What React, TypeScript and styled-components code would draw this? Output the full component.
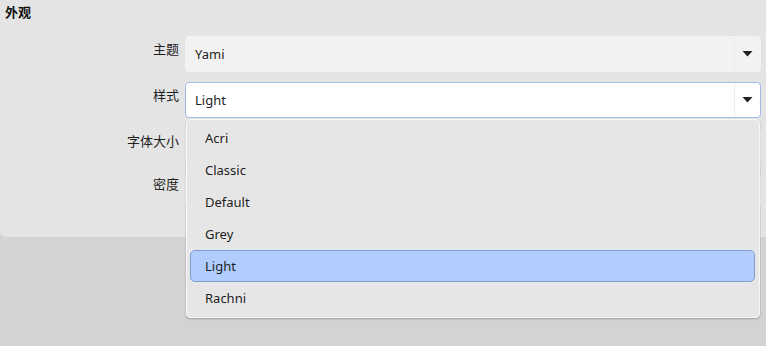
import styled, { createGlobalStyle } from 'styled-components';

const GlobalStyle = createGlobalStyle`
    html, body {
        margin: 0;
        padding: 0;
        background: #d3d3d3;
        font-family: 'Noto Sans', 'Noto Sans CJK SC', sans-serif;
        font-size: 13px;
        color: #1e1e1e;
    }
    body, #root {
        min-height: 100vh;
    }
`;

const styles = ['Acri', 'Classic', 'Default', 'Grey', 'Light', 'Rachni'];

const Caret = () => (
    <svg width="11" height="6" viewBox="0 0 11 6">
        <path d="M0.5 0 H10.5 L5.5 5.5 Z" fill="#222" />
    </svg>
);

const App: React.FC = () => {
    return (
        <StyledPage>
            <GlobalStyle />
            <StyledPanel>
                <StyledTitle>外观</StyledTitle>
                <StyledForm>
                    <StyledLabel>主题</StyledLabel>
                    <StyledSelect>
                        <StyledValue>Yami</StyledValue>
                        <StyledArrow>
                            <Caret />
                        </StyledArrow>
                    </StyledSelect>

                    <StyledLabel>样式</StyledLabel>
                    <StyledSelect $open>
                        <StyledValue>Light</StyledValue>
                        <StyledArrow $open>
                            <Caret />
                        </StyledArrow>
                        <StyledList>
                            {styles.map((s) => (
                                <StyledOption key={s} $selected={s === 'Light'}>
                                    {s}
                                </StyledOption>
                            ))}
                        </StyledList>
                    </StyledSelect>

                    <StyledLabel>字体大小</StyledLabel>
                    <StyledSelect />

                    <StyledLabel $short>密度</StyledLabel>
                    <StyledSelect $short />
                </StyledForm>
            </StyledPanel>
        </StyledPage>
    );
};

export default App;

const StyledPage = styled.div`
    min-height: 100vh;
    background: #d3d3d3;
`;

const StyledPanel = styled.div`
    position: relative;
    background: #e4e4e4;
    height: 237px;
    border-bottom-left-radius: 6px;
    box-sizing: border-box;
    padding: 3px 5px 0 5px;
`;

const StyledTitle = styled.div`
    font-weight: bold;
    font-size: 13px;
    height: 24px;
    line-height: 18px;
    color: #111;
`;

const StyledForm = styled.div`
    display: grid;
    grid-template-columns: 174px 576px;
    column-gap: 6px;
    row-gap: 10px;
    margin-top: 9px;
`;

const StyledLabel = styled.div<{ $short?: boolean }>`
    text-align: right;
    height: ${(p) => (p.$short ? '32px' : '36px')};
    line-height: ${(p) => (p.$short ? '20px' : '26px')};
    color: #1e1e1e;
`;

const StyledSelect = styled.div<{ $open?: boolean; $short?: boolean }>`
    position: relative;
    display: flex;
    align-items: center;
    height: ${(p) => (p.$short ? '32px' : '36px')};
    box-sizing: border-box;
    border-radius: 4px;
    background: ${(p) => (p.$open ? '#ffffff' : '#f2f2f2')};
    border: 1px solid ${(p) => (p.$open ? '#a2bde4' : '#f2f2f2')};
`;

const StyledValue = styled.div`
    flex: 1;
    padding-left: 9px;
    padding-bottom: 1px;
    color: #1e1e1e;
`;

const StyledArrow = styled.div<{ $open?: boolean }>`
    width: 25px;
    height: 100%;
    border-left: 1px solid ${(p) => (p.$open ? '#ececec' : '#ebebeb')};
    display: flex;
    align-items: center;
    justify-content: center;
`;

const StyledList = styled.div`
    position: absolute;
    top: 36px;
    left: 0;
    right: 0;
    z-index: 10;
    background: #e6e6e6;
    border: 1px solid #f7f7f7;
    border-radius: 4px;
    box-shadow: 0 1px 2px rgba(0, 0, 0, 0.25);
    padding: 2px 4px 3px 3px;
    display: flex;
    flex-direction: column;
`;

const StyledOption = styled.div<{ $selected?: boolean }>`
    height: 32px;
    flex: none;
    box-sizing: border-box;
    display: flex;
    align-items: center;
    padding-left: 14px;
    border-radius: 5px;
    border: 1px solid ${(p) => (p.$selected ? '#7e9ed8' : 'transparent')};
    background: ${(p) => (p.$selected ? '#b0cdfd' : 'transparent')};
    color: #1e1e1e;
`;
